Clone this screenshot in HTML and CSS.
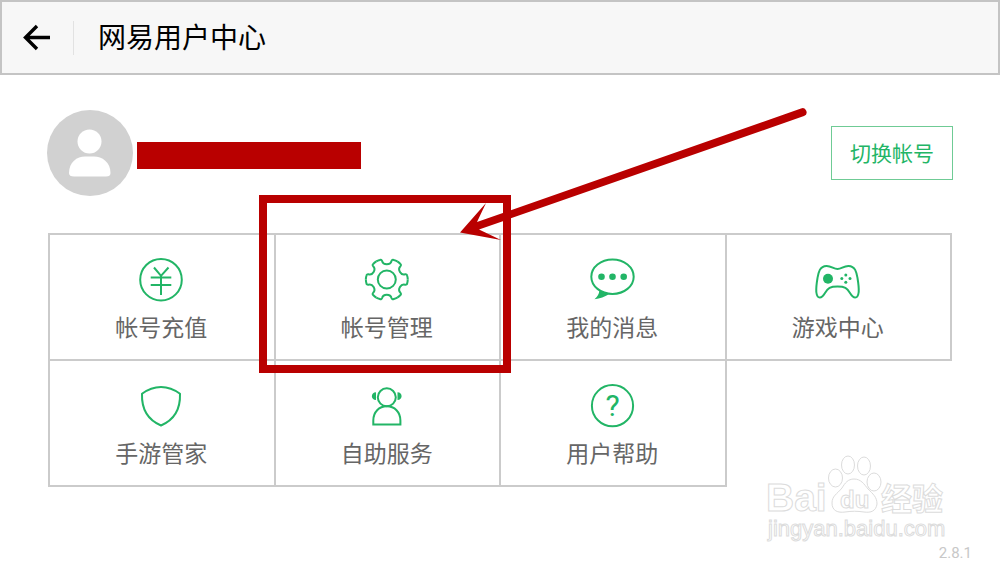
FILE: index.html
```html
<!DOCTYPE html>
<html lang="zh-CN">
<head>
<meta charset="utf-8">
<meta name="viewport" content="width=device-width, initial-scale=1">
<title>网易用户中心</title>
<link rel="stylesheet" href="styles.css">
</head>
<body>
<header class="topbar">
  <button class="back" type="button" aria-label="返回">
    <svg width="28" height="28" viewBox="0 0 28 28"><path d="M14 2 2.500 13.500 14 25M3 13.500H27" fill="none" stroke="#000" stroke-width="3.400"/></svg>
  </button>
  <h1 class="title">网易用户中心</h1>
</header>

<main class="content">
  <section class="account">
    <svg class="avatar" viewBox="0 0 86 86" aria-hidden="true">
      <circle cx="43" cy="43" r="43" fill="#d1d1d1"/>
      <circle cx="42.500" cy="31.500" r="12" fill="#fff"/>
      <path d="M22 63C22 52 30 46.500 38 46.500H47C55 46.500 63.500 52 63.500 63Q63.500 66.500 59 66.500H27Q22 66.500 22 63Z" fill="#fff"/>
    </svg>
    <div class="redacted"></div>
    <button class="switch" type="button">切换帐号</button>
  </section>

  <nav class="menu">
    <a class="cell" href="#recharge">
      <svg class="icon" viewBox="0 0 48 48"><circle cx="23" cy="23.700" r="20.800"/><path d="M16 11.500 23 19.800 30.500 11.500M23 19.800V39M12.700 21.600H33.300M12.700 29H33.300"/></svg>
      <span class="label">帐号充值</span>
    </a>
    <a class="cell" href="#manage">
      <svg class="icon" viewBox="0 0 48 48">
        <defs><path id="tooth" d="M-10.500 -18.100Q-9 -19 -7 -19.500Q-5.200 -20.100 -4.700 -18.500C-4.200 -16.200 -3 -15.200 0 -15.200S4.200 -16.200 4.700 -18.500Q5.200 -20.100 7 -19.500Q9 -19 10.500 -18.100"/></defs>
        <g transform="translate(23.800 23.500)">
          <circle r="9"/>
          <use href="#tooth"/><use href="#tooth" transform="rotate(60)"/><use href="#tooth" transform="rotate(120)"/><use href="#tooth" transform="rotate(180)"/><use href="#tooth" transform="rotate(240)"/><use href="#tooth" transform="rotate(300)"/>
        </g>
      </svg>
      <span class="label">帐号管理</span>
      <svg class="callout" width="552" height="270" viewBox="0 0 552 270" aria-hidden="true">
        <rect x="5" y="94" width="244" height="170" fill="none" stroke="#b90000" stroke-width="8"/>
        <path d="M202 127.500 228 98 219 117 543 3.500A3.900 3.900 0 0 1 546 11L221 124.500 243 135Z" fill="#b90000"/>
      </svg>
    </a>
    <a class="cell" href="#messages">
      <svg class="icon" viewBox="0 0 48 48"><ellipse cx="23.500" cy="20.700" rx="21.200" ry="17.200"/><g class="solid"><circle cx="12.500" cy="20.700" r="3.300"/><circle cx="23.500" cy="20.700" r="3.300"/><circle cx="34.700" cy="20.700" r="3.300"/><path d="M10.500 34Q10 39.500 5.500 43.300Q14 42 19.500 38.600Z"/></g></svg>
      <span class="label">我的消息</span>
    </a>
    <a class="cell" href="#games">
      <svg class="icon" viewBox="0 0 48 48"><path d="M23.500 13C19.500 13 17.500 9.900 12.500 10C5.500 10.200 4.500 16.500 3.500 22C2.500 28 2 32 2.300 36C2.700 39.500 3.800 41.500 5.800 41.600C8 41.700 9.500 39.500 11 37C14 32 16 30.500 23.500 30.500S33 32 36 37C37.500 39.500 39 41.700 41.200 41.600C43.200 41.500 44.300 39.500 44.700 36C45 32 44.500 28 43.500 22C42.500 16.500 41.500 10.200 34.500 10C29.500 9.900 27.500 13 23.500 13Z"/><g class="solid"><circle cx="14" cy="22.700" r="5"/><circle cx="31.800" cy="18.900" r="1.500"/><circle cx="27.800" cy="22.600" r="1.500"/><circle cx="36" cy="22.600" r="1.500"/><circle cx="31.800" cy="26.300" r="1.500"/></g></svg>
      <span class="label">游戏中心</span>
    </a>
    <a class="cell" href="#guard">
      <svg class="icon" viewBox="0 0 48 48"><path stroke-linejoin="round" d="M23 5Q33 5 42 11.800C42.500 27 36 38 23 43.500C10 38 3.500 27 4 11.800Q13 5 23 5Z"/></svg>
      <span class="label">手游管家</span>
    </a>
    <a class="cell" href="#service">
      <svg class="icon" viewBox="0 0 48 48"><circle cx="23.800" cy="15.300" r="9"/><path d="M10.300 42.600V38.500C10.300 30 16 24.300 23.800 24.300S37.400 30 37.400 38.500V42.600Z"/><g class="solid"><path d="M13 10.200V18C7.500 18 7.500 10.200 13 10.200ZM34.500 10.200V18C40 18 40 10.200 34.500 10.200Z"/></g></svg>
      <span class="label">自助服务</span>
    </a>
    <a class="cell" href="#help">
      <svg class="icon" viewBox="0 0 48 48"><circle cx="23.500" cy="23.700" r="20.600"/><text class="mark" x="23.500" y="34" text-anchor="middle">?</text></svg>
      <span class="label">用户帮助</span>
    </a>
  </nav>
</main>

<footer class="footer">2.8.1</footer>

<svg class="watermark" width="184" height="92" viewBox="0 0 184 92">
  <ellipse cx="84" cy="14" rx="6.500" ry="9"/>
  <ellipse cx="100" cy="15" rx="6.500" ry="9"/>
  <ellipse cx="71.500" cy="27" rx="7" ry="9"/>
  <ellipse cx="110" cy="31" rx="7" ry="9"/>
  <path d="M90 28C97 28 100 33 104 38C109 43 113 46 113 53C112 60 107 62 100 61C93 60 88 60 81 61C74 62 68 60 68 52C68 45 73 43 78 37C81 32 84 28 90 28Z"/>
  <text x="2" y="60" class="brand">Bai</text>
  <text x="76" y="57" class="du">du</text>
  <text x="117" y="59" class="cjk">经验</text>
  <text x="4" y="85" class="site">jingyan.baidu.com</text>
</svg>
</body>
</html>
```
FILE: styles.css
```css
* { box-sizing: border-box; }

body {
  position: relative;
  display: flex;
  flex-direction: column;
  min-height: 100vh;
  margin: 0;
  background: #fff;
  font-family: Roboto, "Noto Sans CJK SC", sans-serif;
}

.topbar {
  display: flex;
  align-items: center;
  height: 75px;
  padding: 1px 0 0 21px;
  background: #f7f7f7;
  border: 2px solid #c4c4c4;
}

.back {
  display: flex;
  align-items: center;
  height: 34px;
  padding: 0 22px 0 0;
  background: none;
  border: 0;
  border-right: 1px solid #e2e2e2;
}

.title {
  margin: 0 0 0 24px;
  padding-top: 2px;
  font-size: 28px;
  font-weight: 400;
  line-height: 40px;
  color: #000;
}

.content {
  flex: 1;
  padding: 35px 48px 0;
}

.account {
  display: flex;
  align-items: center;
  margin-bottom: 37px;
}

.avatar {
  width: 86px;
  height: 86px;
  margin-left: -1px;
}

.redacted {
  width: 224px;
  height: 27px;
  margin: 4px 0 0 4px;
  background: #b90000;
}

.switch {
  width: 122px;
  height: 54px;
  margin: 0 -1px 0 auto;
  padding: 0 0 2px;
  background: #fff;
  border: 1px solid #6fcb95;
  font: inherit;
  font-size: 21px;
  color: #22b566;
}

.menu {
  display: grid;
  grid-template-columns: repeat(4, 1fr);
  padding-right: 2px;
}

.cell {
  position: relative;
  display: flex;
  flex-direction: column;
  align-items: center;
  gap: 9px;
  margin: 0 -2px -2px 0;
  padding: 21px 0 14px;
  border: 2px solid #cbcbcb;
  text-decoration: none;
}

.icon {
  width: 48px;
  height: 48px;
  fill: none;
  stroke: #22b566;
  stroke-width: 2;
}

.icon .solid {
  fill: #22b566;
  stroke: none;
}

.mark {
  fill: #22b566;
  stroke: none;
  font-family: Roboto, sans-serif;
  font-size: 30px;
}

.label {
  padding-right: 1px;
  font-size: 23px;
  line-height: 32px;
  color: #666;
}

.callout {
  position: absolute;
  top: -130px;
  left: -18px;
  z-index: 2;
  pointer-events: none;
}

.footer {
  padding: 0 28px 1px 0;
  font-size: 15px;
  line-height: 18px;
  text-align: right;
  color: #c8c8c8;
}

.watermark {
  position: absolute;
  right: 52px;
  bottom: 20px;
  fill: #fff;
  stroke: #dcdcdc;
  stroke-width: 1;
  font-family: "Liberation Sans", "Noto Sans CJK SC", sans-serif;
  pointer-events: none;
}

.brand { font-size: 39px; font-weight: 700; }
.du { font-size: 24px; font-weight: 700; }
.cjk { font-size: 31px; font-weight: 700; }
.site { font-size: 22px; }
```
